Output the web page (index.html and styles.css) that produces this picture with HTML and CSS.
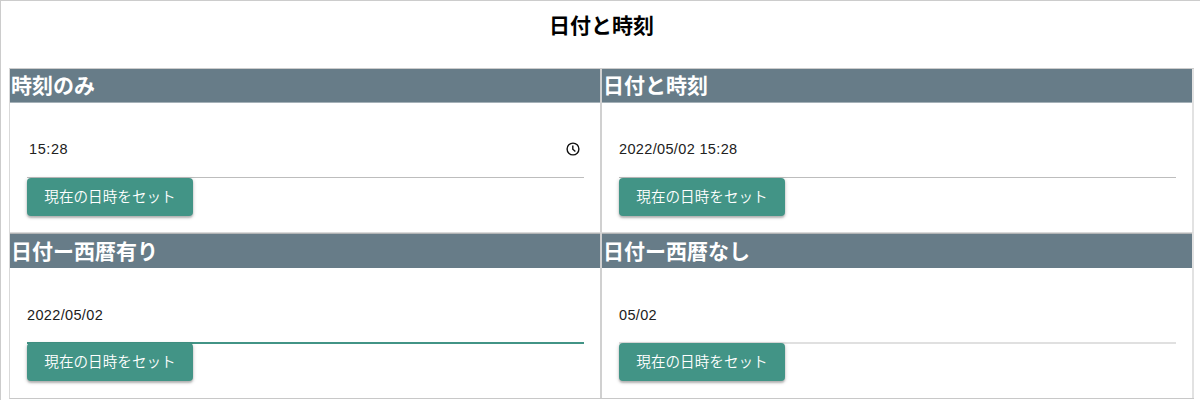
FILE: index.html
```
<!DOCTYPE html>
<html lang="ja">
<head>
<meta charset="utf-8">
<title>日付と時刻</title>
<link rel="stylesheet" href="styles.css">
</head>
<body>
<main class="page">
  <h1 class="title">日付と時刻</h1>
  <div class="grid">
    <section class="cell">
      <h2 class="heading">時刻のみ</h2>
      <div class="content">
        <div class="field field-time"><span>15:28</span>
          <svg class="clock" viewBox="0 0 14 14"><circle cx="7" cy="7" r="5.9"/><path d="M6.8 3.5V7.2L9.4 9.6"/></svg>
        </div>
        <button class="button">現在の日時をセット</button>
      </div>
    </section>
    <section class="cell">
      <h2 class="heading">日付と時刻</h2>
      <div class="content">
        <div class="field"><span>2022/05/02 15:28</span></div>
        <button class="button">現在の日時をセット</button>
      </div>
    </section>
    <section class="cell lower">
      <h2 class="heading">日付ー西暦有り</h2>
      <div class="content">
        <div class="field field-active"><span>2022/05/02</span></div>
        <button class="button">現在の日時をセット</button>
      </div>
    </section>
    <section class="cell lower">
      <h2 class="heading">日付ー西暦なし</h2>
      <div class="content">
        <div class="field field-soft"><span>05/02</span></div>
        <button class="button">現在の日時をセット</button>
      </div>
    </section>
  </div>
</main>
</body>
</html>
```
FILE: styles.css
```
* { box-sizing: border-box; }
body {
  margin: 0;
  background: #fff;
  font-family: "Liberation Sans", "Noto Sans CJK JP", sans-serif;
  overflow: hidden;
}
.page {
  height: 400px;
  border-top: 1px solid #ccc;
  border-left: 1px solid #ccc;
  padding-left: 8px;
}
.title {
  margin: 0 0 21px;
  height: 46px;
  width: 1185px;
  text-align: center;
  font: 700 21px/46px "Noto Sans CJK JP", sans-serif;
  color: #000;
}
.grid {
  display: grid;
  grid-template-columns: 592px 592px;
  grid-template-rows: 163px 166px;
  width: 1185px;
  border-left: 1px solid #d9d9d9;
  border-top: 1px solid #ccc;
  border-bottom: 1px solid #c8c8c8;
}
.cell {
  border-right: 2px solid #d0d0d0;
  display: flex;
  flex-direction: column;
}
.cell:nth-child(even) { border-right-color: #e2e2e2; }
.heading {
  margin: 0;
  height: 34px;
  padding-left: 1px;
  background: #677c88;
  border-bottom: 1px solid #a5b1b8;
  color: #fff;
  font: 700 21px/31px "Noto Sans CJK JP", sans-serif;
}
.lower .heading {
  height: 35px;
  border-top: 1px solid #b2b4b5;
  border-bottom: 0;
  line-height: 32px;
}
.lower { border-top: 1px solid #dadada; }
.content { padding: 19px 16px 0 17px; }
.field {
  display: flex;
  align-items: center;
  justify-content: space-between;
  height: 56px;
  padding-bottom: 2px;
  border-bottom: 1px solid #bdbdbd;
  color: #212121;
  font-size: 14.5px;
  letter-spacing: .35px;
}
.field-time { padding: 0 4px 2px 2px; letter-spacing: .6px; }
.field-active,
.field-soft {
  height: 57px;
  margin-bottom: -1px;
  padding-bottom: 0;
}
.field-active { border-bottom: 2px solid #429486; }
.field-soft { border-bottom: 2px solid #e0e0e0; }
.clock {
  width: 14px;
  height: 14px;
  fill: none;
  stroke: #111;
  stroke-width: 1.4;
}
.button {
  display: block;
  position: relative;
  width: 166px;
  height: 38px;
  padding: 0 0 2px;
  border: 0;
  border-radius: 4px;
  background: #429486;
  color: #fff;
  box-shadow: 0 2px 2px rgba(0,0,0,.2), 0 1px 4px rgba(0,0,0,.2);
  font: 350 14.6px/36px "Noto Sans CJK JP", sans-serif;
}
```
